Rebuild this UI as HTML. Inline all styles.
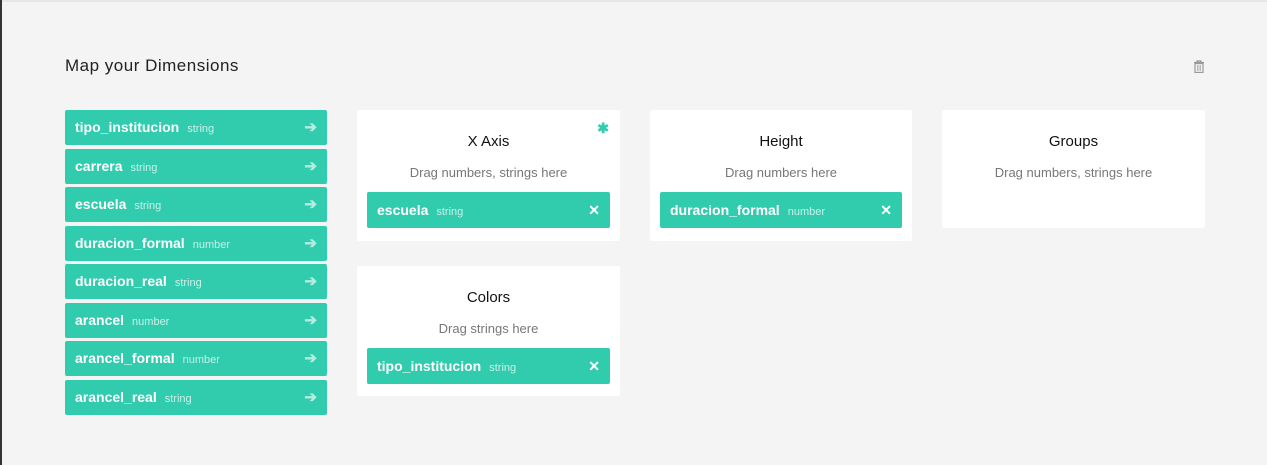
<html><head><style>
body{margin:0;width:1267px;height:465px;background:#f4f4f4;font-family:"Liberation Sans",sans-serif;position:relative;overflow:hidden}
.lb{position:absolute;left:0;top:0;width:2px;height:465px;background:#333}
.tb{position:absolute;left:0;top:0;width:1267px;height:2px;background:#e6e6e6}
h1{position:absolute;left:65px;top:56px;margin:0;font-size:17px;letter-spacing:0.5px;font-weight:normal;color:#222}
.it{position:absolute;left:65px;width:262px;height:35px;background:#31cbae;border-radius:2px;color:#fff;font-weight:bold;font-size:14px;line-height:35px;box-sizing:border-box;padding-left:10px}
.it i{font-style:normal;font-weight:normal;font-size:11px;color:#c9f1e8;margin-left:8px}
.it b{position:absolute;right:10px;top:0;color:#b5ece0;font-size:15px}
.cd{position:absolute;width:263px;background:#fff;border-radius:2px;text-align:center}
.cd .t{position:absolute;top:23px;width:100%;font-size:15px;color:#111}
.cd .d{position:absolute;top:55px;width:100%;font-size:13px;color:#777}
.ch{position:absolute;left:10px;top:82px;width:243px;height:36px;text-align:left;background:#31cbae;border-radius:2px;color:#fff;font-weight:bold;font-size:14px;line-height:36px;box-sizing:border-box;padding-left:10px}
.ch i{font-style:normal;font-weight:normal;font-size:11px;color:#c9f1e8;margin-left:8px}
.ch b{position:absolute;right:10px;top:0;font-size:14px}
</style></head><body>
<div class="tb"></div><div class="lb"></div>
<h1>Map your Dimensions</h1>
<svg style="position:absolute;left:1193px;top:60px" width="12" height="13" viewBox="0 0 12 13"><path d="M1 2.5h10M4 2.5V1h4v1.5M2 3.5h8v9H2z" fill="none" stroke="#999" stroke-width="1.2"/><path d="M4.5 5v6M6 5v6M7.5 5v6" stroke="#aaa" stroke-width=".8"/></svg>
<div class="it" style="top:110px">tipo_institucion<i>string</i><b>➔</b></div>
<div class="it" style="top:149px">carrera<i>string</i><b>➔</b></div>
<div class="it" style="top:187px">escuela<i>string</i><b>➔</b></div>
<div class="it" style="top:226px">duracion_formal<i>number</i><b>➔</b></div>
<div class="it" style="top:264px">duracion_real<i>string</i><b>➔</b></div>
<div class="it" style="top:303px">arancel<i>number</i><b>➔</b></div>
<div class="it" style="top:341px">arancel_formal<i>number</i><b>➔</b></div>
<div class="it" style="top:380px">arancel_real<i>string</i><b>➔</b></div>
<div class="cd" style="left:357px;top:110px;height:131px"><div class="t">X Axis</div><span style="position:absolute;right:11px;top:10px;color:#31cbae;font-size:14px;font-weight:bold">✱</span><div class="d">Drag numbers, strings here</div><div class="ch">escuela<i>string</i><b>✕</b></div></div>
<div class="cd" style="left:650px;top:110px;height:131px;width:262px"><div class="t">Height</div><div class="d">Drag numbers here</div><div class="ch" style="width:242px">duracion_formal<i>number</i><b>✕</b></div></div>
<div class="cd" style="left:942px;top:110px;height:118px"><div class="t">Groups</div><div class="d">Drag numbers, strings here</div></div>
<div class="cd" style="left:357px;top:266px;height:130px"><div class="t">Colors</div><div class="d">Drag strings here</div><div class="ch">tipo_institucion<i>string</i><b>✕</b></div></div>
</body></html>
